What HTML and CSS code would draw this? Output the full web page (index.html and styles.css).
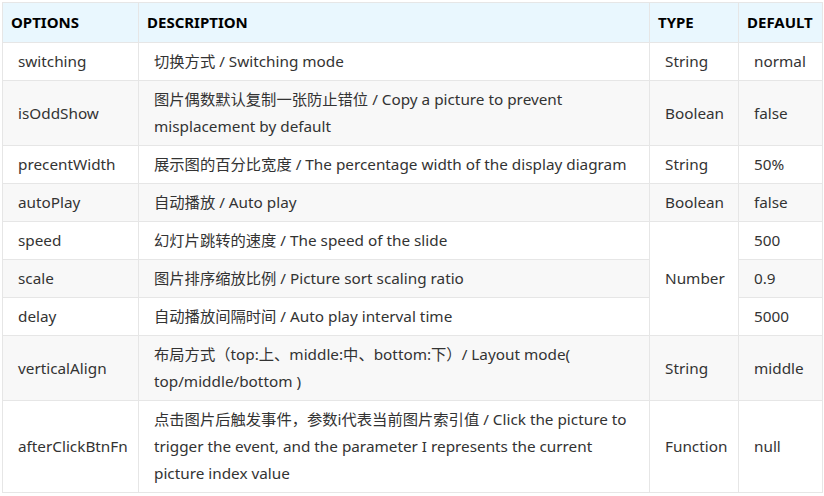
FILE: index.html
```html
<!DOCTYPE html>
<html>
<head>
<meta charset="utf-8">
<link rel="stylesheet" href="styles.css">
</head>
<body>
<div class="wrap">
<table class="opts">
  <colgroup>
    <col class="c1"><col class="c2"><col class="c3"><col class="c4">
  </colgroup>
  <thead>
    <tr><th>OPTIONS</th><th>DESCRIPTION</th><th>TYPE</th><th>DEFAULT</th></tr>
  </thead>
  <tbody>
    <tr><td>switching</td><td>切换方式 / Switching mode</td><td>String</td><td>normal</td></tr>
    <tr class="alt"><td>isOddShow</td><td>图片偶数默认复制一张防止错位 / Copy a picture to prevent misplacement by default</td><td>Boolean</td><td>false</td></tr>
    <tr><td>precentWidth</td><td>展示图的百分比宽度 / The percentage width of the display diagram</td><td>String</td><td>50%</td></tr>
    <tr class="alt"><td>autoPlay</td><td>自动播放 / Auto play</td><td>Boolean</td><td>false</td></tr>
    <tr><td>speed</td><td>幻灯片跳转的速度 / The speed of the slide</td><td rowspan="3" class="white">Number</td><td>500</td></tr>
    <tr class="alt"><td>scale</td><td>图片排序缩放比例 / Picture sort scaling ratio</td><td>0.9</td></tr>
    <tr><td>delay</td><td>自动播放间隔时间 / Auto play interval time</td><td>5000</td></tr>
    <tr class="alt"><td>verticalAlign</td><td>布局方式（top:上、middle:中、bottom:下）/ Layout mode( top/middle/bottom )</td><td>String</td><td>middle</td></tr>
    <tr><td>afterClickBtnFn</td><td>点击图片后触发事件，参数i代表当前图片索引值 / Click the picture to trigger the event, and the parameter I represents the current picture index value</td><td>Function</td><td>null</td></tr>
  </tbody>
</table>
</div>
</body>
</html>
```
FILE: styles.css
```css
html, body {
  margin: 0;
  padding: 0;
  background: #fff;
}
.wrap {
  padding: 2px;
}
.opts {
  border-collapse: collapse;
  table-layout: fixed;
  width: 821px;
  font-family: "Noto Sans", "Noto Sans CJK SC", sans-serif;
  font-size: 15.3px;
  color: #333;
}
.c1 { width: 136px; }
.c2 { width: 511px; }
.c3 { width: 89px; }
.c4 { width: 84px; }
.opts th, .opts td {
  border: 1px solid #e6e6e6;
  text-align: left;
  vertical-align: middle;
  line-height: 27px;
}
.opts th {
  background: #e9f7fe;
  color: #000;
  font-weight: bold;
  font-size: 15px;
  padding: 6px 8px 6px;
}
.opts td {
  padding: 5px 16px 5px 15px;
}
.opts tr.alt td {
  background: #f8f8f8;
}
.opts td.white {
  background: #fff;
}
```
